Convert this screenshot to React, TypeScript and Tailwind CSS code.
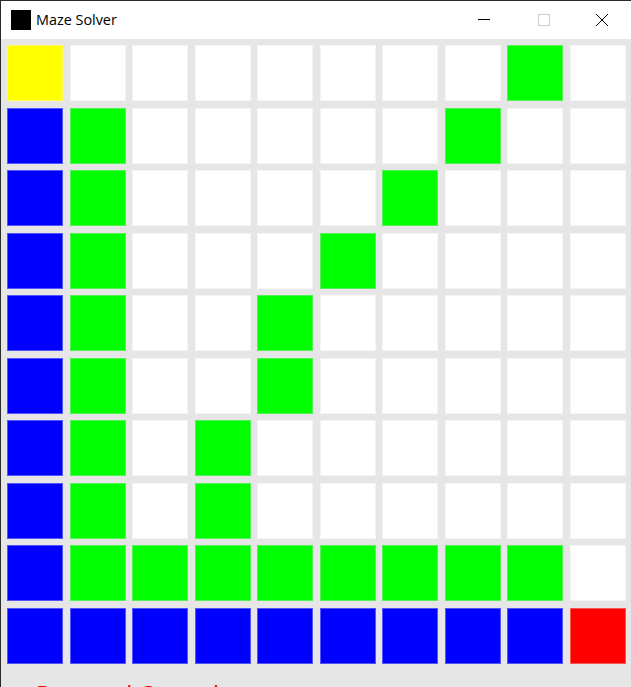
const G = 'G', W = 'W', B = 'B';
const rows: string[][] = [
  ['Y', W, W, W, W, W, W, W, G, W],
  [B, G, W, W, W, W, W, G, W, W],
  [B, G, W, W, W, W, G, W, W, W],
  [B, G, W, W, W, G, W, W, W, W],
  [B, G, W, W, G, W, W, W, W, W],
  [B, G, W, W, G, W, W, W, W, W],
  [B, G, W, G, W, W, W, W, W, W],
  [B, G, W, G, W, W, W, W, W, W],
  [B, G, G, G, G, G, G, G, G, W],
  [B, B, B, B, B, B, B, B, B, 'R'],
];
const cls: Record<string, string> = {
  Y: 'bg-[#ffff00] border-[#ffff55]',
  W: 'bg-white border-[#f4f4f4]',
  G: 'bg-[#00ff00] border-[#55f055]',
  B: 'bg-[#0000ff] border-[#5555ff]',
  R: 'bg-[#ff0000] border-[#ff5555]',
};
export default function App() {
  return (
    <div className="w-[631px] h-[687px] overflow-hidden flex flex-col bg-[#e6e6e6] border-l border-t border-[#2b2b2b] font-['Open_Sans',sans-serif]">
      <div className="h-[38px] shrink-0 bg-white flex items-center pl-[10px]">
        <div className="w-5 h-5 bg-black" />
        <span className="ml-[5px] text-[14.4px] leading-[18px] mb-[1px] text-black">Maze Solver</span>
        <div className="ml-auto flex items-center mb-[1px]">
          <svg width="46" height="20" viewBox="0 0 46 20" className="mr-[13px]"><path d="M11 9.5h12" stroke="#000" fill="none" /></svg>
          <svg width="46" height="20" viewBox="0 0 46 20"><rect x="12.5" y="4.5" width="11" height="11" stroke="#ccc" fill="none" /></svg>
          <svg width="46" height="20" viewBox="0 0 46 20" className="ml-[13px]"><path d="M11 4l12 12M23 4L11 16" stroke="#000" fill="none" /></svg>
        </div>
      </div>
      <div className="grid grid-cols-[repeat(10,56px)] auto-rows-[56px] gap-[6.5px] pl-[6px] pt-[6px]">
        {rows.flat().map((c, i) => (
          <div key={i} className={`border ${cls[c]}`} />
        ))}
      </div>
      <div className="pl-[35px] mt-[16px] text-[24px] leading-[28px] font-medium whitespace-nowrap text-[#ff0000]">Removal <span className="tracking-[2px]">Complete</span></div>
    </div>
  );
}
